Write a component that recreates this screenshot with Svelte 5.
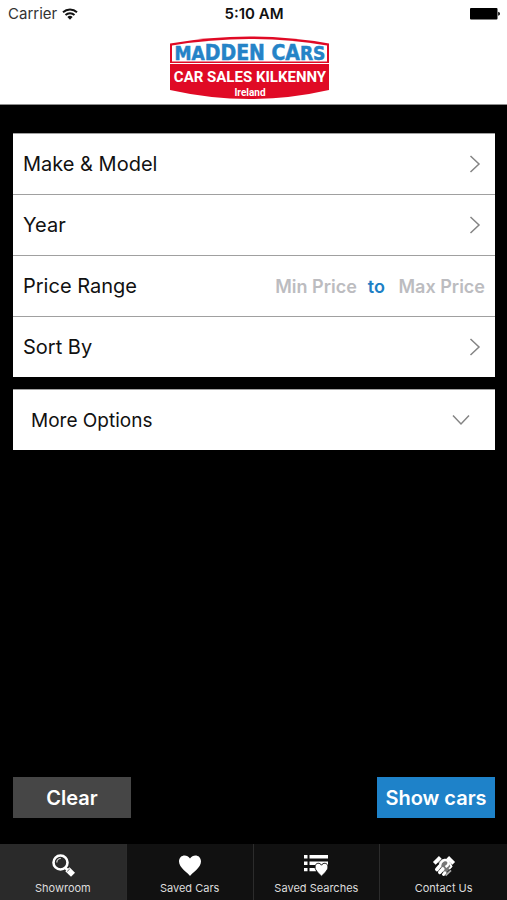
<script>
  let minPrice = $state('');
  let maxPrice = $state('');
  let active = $state('Showroom');
  const tabs = ['Showroom', 'Saved Cars', 'Saved Searches', 'Contact Us'];

  function clear() {
    minPrice = '';
    maxPrice = '';
  }
</script>

{#snippet chevron()}
  <svg width="12" height="20" viewBox="0 0 12 20" aria-hidden="true">
    <path d="M1.500 2 10 10l-8.500 8" fill="none" stroke="#848484" stroke-width="1.500" />
  </svg>
{/snippet}

<div class="app">
  <header>
    <div class="status">
      <span class="carrier">
        Carrier
        <svg width="16" height="12" viewBox="0 0 16 12" aria-hidden="true">
          <g fill="none" stroke="#111" stroke-width="1.900">
            <path d="M1 4.300a10.200 10.200 0 0 1 14 0" />
            <path d="M3.500 7a6.600 6.600 0 0 1 9 0" />
          </g>
          <path d="M5.400 8.900a4 4 0 0 1 5.200 0L8 11.700z" fill="#111" />
        </svg>
      </span>
      <span class="time">5:10 AM</span>
      <span class="battery">
        <svg width="30" height="12" viewBox="0 0 30 12" aria-hidden="true">
          <rect x="0" y="0" width="27.500" height="11.500" rx="1" />
          <path d="M28.200 3.800q1.800.4 1.800 2t-1.800 2z" />
        </svg>
      </span>
    </div>
    <div class="brand">
      <svg width="160" height="64" viewBox="0 0 160 64" role="img" aria-label="Madden Cars, Car Sales Kilkenny, Ireland">
        <path d="M0 7.500Q80-6.500 159 7.500V54Q80 72 0 54z" fill="#e00a25" />
        <path d="M2 9.500Q80-3.500 157 9.500V25.500H2z" fill="#fff" />
        <path d="M0 27.500H159" stroke="#fff" stroke-width="1" />
        <g text-anchor="middle">
          <text class="name" x="80" y="24"><tspan font-size="19">MA</tspan><tspan font-size="21">DDEN CA</tspan><tspan font-size="19">RS</tspan></text>
          <text class="trade" x="80" y="46" font-size="15">CAR SALES KILKENNY</text>
          <text class="place" x="80" y="60" font-size="10">Ireland</text>
        </g>
      </svg>
    </div>
  </header>

  <main>
    <div class="card">
      <button class="row">Make &amp; Model {@render chevron()}</button>
      <button class="row">Year {@render chevron()}</button>
      <div class="row">
        <label for="min-price">Price Range</label>
        <div class="prices">
          <input id="min-price" type="text" inputmode="numeric" placeholder="Min Price" bind:value={minPrice} />
          <label for="max-price">to</label>
          <input id="max-price" type="text" inputmode="numeric" placeholder="Max Price" bind:value={maxPrice} />
        </div>
      </div>
      <button class="row">Sort By {@render chevron()}</button>
    </div>

    <div class="card">
      <button class="row more">
        More Options
        <svg width="20" height="12" viewBox="0 0 20 12" aria-hidden="true">
          <path d="M2 1.500 10 10l8-8.500" fill="none" stroke="#848484" stroke-width="1.500" />
        </svg>
      </button>
    </div>

    <div class="actions">
      <button class="clear" onclick={clear}>Clear</button>
      <button class="show">Show cars</button>
    </div>
  </main>

  <nav>
    {#each tabs as tab}
      <button class="tab" class:active={active === tab} onclick={() => (active = tab)}>
        <svg width="26" height="24" viewBox="0 0 26 24" aria-hidden="true">
          {#if tab === 'Showroom'}
            <circle cx="10.500" cy="9.500" r="7" fill="none" stroke="#fff" stroke-width="2.600" />
            <path d="M6.800 9.500a4.200 4.200 0 0 1 4-4.200" fill="none" stroke="#ccc" stroke-width="1.300" />
            <path d="m15 14.500 3 3" stroke="#fff" stroke-width="2.600" />
            <path d="m15.300 18.200 4.200-4 5.500 5.500-4 4.100z" fill="#fff" />
            <path d="m17.200 18.400 2.600-2.500" stroke="#333" stroke-width=".8" />
          {:else if tab === 'Saved Cars'}
            <path d="M13 23C11 20 2 14.500 2 8.500 2 1.500 10 .5 13 5.500 16 .5 24 1.500 24 8.500 24 14.500 15 20 13 23z" fill="#fff" />
          {:else if tab === 'Saved Searches'}
            <g fill="#fff">
              <path d="M1 2h3.500v3.500H1zM6.500 2H25v3.500H6.500zM1 8.500h3.500V12H1zM6.500 8.500H25V12H6.500zM1 15h3.500v3.300H1zM6.500 15H13v3.300H6.500z" />
              <path d="M18.500 23.500C17 21 12 18 12 14c0-4.300 5-4.800 6.500-1.800 1.500-3 6.500-2.500 6.500 1.800 0 4-5 7-6.500 9.500z" stroke="#111" stroke-width="1" />
            </g>
          {:else}
            <path d="M7 9 11 6h5l4 4 1 4-8 8-3-8z" fill="#777" />
            <g fill="none" stroke="#fff">
              <path d="m3.300 10.300 6-6M22.700 10.300l-6-6" stroke-width="3.800" />
              <path d="M10 12.800c-2-1.500 1-5.300 3.500-5.800 3.500-.5 5.500 2.500 3 5.500l-2 1.500" stroke-width="2.400" />
              <path d="m18.500 10 2 3.500-2.300 2.500" stroke-width="1.800" />
              <path d="m5.800 16.500 2.800-3.300M8.800 19.300l3-3.300" stroke-width="3.600" stroke-linecap="round" />
              <path d="m12.500 21.500 1.500-1.700" stroke-width="3" stroke-linecap="round" />
            </g>
            <path d="m14.500 22.500 5.500-5.200" stroke="#aaa" stroke-width="1.800" />
          {/if}
        </svg>
        <span>{tab}</span>
      </button>
    {/each}
  </nav>
</div>

<style>
  :global(body) {
    margin: 0;
    background: #000;
  }
  .app {
    display: flex;
    flex-direction: column;
    min-height: 100vh;
    background: #000;
    color: #111;
    font-family: Inter, "Liberation Sans", sans-serif;
  }
  button,
  input {
    font: inherit;
    color: inherit;
    border: 0;
    border-radius: 0;
    margin: 0;
    padding: 0;
    background: none;
  }
  button {
    cursor: pointer;
  }
  svg {
    display: block;
    flex: none;
  }
  header {
    background: #fff;
    border-bottom: 1px solid #8e8e8e;
  }
  .status {
    display: grid;
    grid-template-columns: 1fr auto 1fr;
    align-items: center;
    height: 27px;
    padding: 0 7px 0 8px;
    font-size: 15px;
  }
  .carrier {
    display: flex;
    align-items: center;
    gap: 5px;
    color: #333;
  }
  .time {
    font-weight: 600;
  }
  .battery {
    justify-self: end;
  }
  .brand {
    display: flex;
    justify-content: center;
    padding: 9px 8px 4px 0;
  }
  .name {
    font-family: "DejaVu Sans Condensed", "DejaVu Sans", sans-serif;
    font-weight: 700;
    fill: #2583c7;
    stroke: #2583c7;
    stroke-width: 0.5;
  }
  .trade,
  .place {
    font-family: Roboto, "Liberation Sans", sans-serif;
    font-weight: 700;
    fill: #fff;
  }
  main {
    flex: 1;
    display: flex;
    flex-direction: column;
    gap: 12px;
    padding: 28px 12px 26px 13px;
  }
  .card {
    background: #fff;
  }
  .row {
    display: flex;
    align-items: center;
    justify-content: space-between;
    box-sizing: border-box;
    width: 100%;
    height: 61px;
    padding: 0 14px 0 10px;
    border-top: 1px solid #a0a0a0;
    font-size: 20px;
    text-align: left;
  }
  div.row {
    padding-right: 10px;
  }
  .row.more {
    padding: 0 24px 0 18px;
    font-size: 19px;
  }
  .prices {
    display: flex;
    align-items: center;
    gap: 11px;
    font-size: 18px;
    font-weight: 600;
    color: #1d80c5;
  }
  .prices input {
    width: 89px;
    text-align: right;
    color: #111;
  }
  .prices input::placeholder {
    color: #bcbcc0;
    opacity: 1;
  }
  .actions {
    display: flex;
    justify-content: space-between;
    margin-top: auto;
  }
  .actions button {
    width: 118px;
    height: 41px;
    color: #fff;
    font-size: 20px;
    font-weight: 600;
  }
  .actions .clear {
    background: #464646;
  }
  .actions .show {
    background: #1e82c9;
  }
  nav {
    display: grid;
    grid-template-columns: repeat(4, 1fr);
    height: 56px;
  }
  .tab {
    display: flex;
    flex-direction: column;
    align-items: center;
    gap: 3px;
    padding-top: 9px;
    background: #111;
    border-right: 1px solid #2c2c2c;
    color: #ddd;
    font-size: 11px;
    line-height: 16px;
  }
  .tab:last-child {
    border-right: 0;
  }
  .tab.active {
    background: #2a2a2a;
  }
</style>
